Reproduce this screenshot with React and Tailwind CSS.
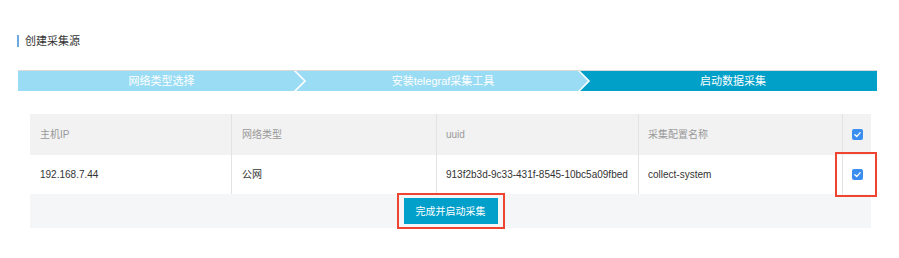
const font = { fontFamily: '"Liberation Sans", "Noto Sans CJK SC", sans-serif' };

function Check() {
  return (
    <span className="inline-flex w-[11px] h-[11px] rounded-[2px] bg-[#3a8ef0] items-center justify-center">
      <svg width="9" height="9" viewBox="0 0 10 10">
        <path d="M2 5.2 L4.2 7.2 L8 3" fill="none" stroke="#fff" strokeWidth="1.4" strokeLinecap="round" strokeLinejoin="round" />
      </svg>
    </span>
  );
}

function Chevron() {
  return (
    <svg className="absolute left-0 top-0" width="14" height="20" viewBox="0 0 14 20">
      <polygon points="0,0 1,0 12,10 1,20 0,20" fill="#9adcf3" />
      <polyline points="1,-1 12,10 1,21" fill="none" stroke="#fff" strokeWidth="1.6" />
    </svg>
  );
}

export default function App() {
  return (
    <div className="w-[899px] h-[258px] bg-white text-[12px]" style={font}>
      {/* Title */}
      <div className="pt-[34px] pl-[17px] flex items-center h-[47px]">
        <span className="w-[2px] h-[12px] bg-[#6aa9e2]" />
        <span className="ml-[6px] text-[11px] text-[#333] leading-[14px]">创建采集源</span>
      </div>

      {/* Steps */}
      <div className="ml-[18px] mt-[23px] w-[859px] border-t border-[#d9d9d9] flex h-[21px] text-[11px] text-white">
        <div className="relative w-[275px] bg-[#9adcf3] flex items-center justify-center">
          <span className="ml-[12px]">网络类型选择</span>
        </div>
        <div className="relative w-[284px] bg-[#9adcf3] flex items-center justify-center">
          <Chevron />
          <span className="ml-[16px]">安装telegraf采集工具</span>
        </div>
        <div className="relative w-[300px] bg-[#00a0c9] flex items-center justify-center">
          <Chevron />
          <span className="ml-[12px]">启动数据采集</span>
        </div>
      </div>

      {/* Table */}
      <div className="ml-[30px] mt-[23px] w-[841px] text-[10px]">
        <div className="flex h-[41px] bg-[#f2f2f2] text-[#999]">
          <div className="w-[202px] pl-[10px] flex items-center border-r border-[#e3e3e3]">主机IP</div>
          <div className="w-[205px] pl-[10px] flex items-center border-r border-[#e3e3e3]">网络类型</div>
          <div className="w-[202px] pl-[9px] flex items-center border-r border-[#e3e3e3]">uuid</div>
          <div className="w-[204px] pl-[9px] flex items-center border-r border-[#e3e3e3]">采集配置名称</div>
          <div className="w-[28px] flex items-center justify-center pl-[1px]">
            <Check />
          </div>
        </div>
        <div className="flex h-[39px] bg-white text-[#333]">
          <div className="w-[202px] pl-[10px] flex items-center border-r border-[#e3e3e3]">192.168.7.44</div>
          <div className="w-[205px] pl-[10px] flex items-center border-r border-[#e3e3e3]">公网</div>
          <div className="w-[202px] pl-[9px] flex items-center border-r border-[#e3e3e3] whitespace-nowrap">
            913f2b3d-9c33-431f-8545-10bc5a09fbed
          </div>
          <div className="w-[204px] pl-[9px] flex items-center border-r border-[#e3e3e3]">collect-system</div>
          <div className="relative w-[28px] flex items-center justify-center pl-[1px]">
            <Check />
            <span className="absolute left-[-8px] top-[-3px] w-[42px] h-[45px] border-2 border-[#ee4430]" />
          </div>
        </div>
        <div className="h-[34px] bg-[#f5f6f8] flex justify-center">
          <div className="mt-[-1px] h-[36px] border-2 border-[#ee4430] px-[5px] pt-[3px]">
            <button className="w-[94px] h-[26px] bg-[#00a0cb] text-white text-[10px]">完成并启动采集</button>
          </div>
        </div>
      </div>
    </div>
  );
}
